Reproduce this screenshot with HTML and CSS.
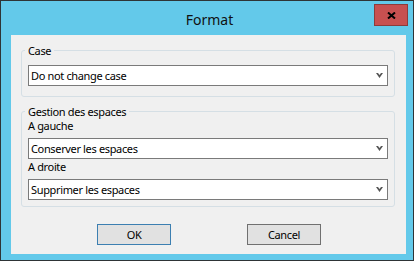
FILE: index.html
```html
<!DOCTYPE html>
<html lang="fr">
<head>
<meta charset="utf-8">
<title>Format</title>
<link rel="stylesheet" href="styles.css">
</head>
<body>
<div class="window">
  <div class="titlebar">
    <span class="spacer"></span>
    <div class="title">Format</div>
    <button class="close" type="button" aria-label="Fermer">
      <svg width="9" height="7" viewBox="0 0 9 7"><path d="M1 0.5 L8 6.5 M8 0.5 L1 6.5" stroke="#000" stroke-width="2" fill="none"/></svg>
    </button>
  </div>
  <div class="client">
    <fieldset class="group g1">
      <legend>Case</legend>
      <div class="select"><span>Do not change case</span><svg class="chev" width="7" height="5" viewBox="0 0 7 5"><polygon points="0,0 2,0 3.5,2 5,0 7,0 3.5,5" fill="#555"/></svg></div>
    </fieldset>
    <fieldset class="group g2">
      <legend>Gestion des espaces</legend>
      <div class="label">A gauche</div>
      <div class="select"><span>Conserver les espaces</span><svg class="chev" width="7" height="5" viewBox="0 0 7 5"><polygon points="0,0 2,0 3.5,2 5,0 7,0 3.5,5" fill="#555"/></svg></div>
      <div class="label">A droite</div>
      <div class="select"><span>Supprimer les espaces</span><svg class="chev" width="7" height="5" viewBox="0 0 7 5"><polygon points="0,0 2,0 3.5,2 5,0 7,0 3.5,5" fill="#555"/></svg></div>
    </fieldset>
    <div class="buttons">
      <button class="btn default" type="button">OK</button>
      <button class="btn" type="button">Cancel</button>
    </div>
  </div>
</div>
</body>
</html>
```

FILE: styles.css
```css
body {
  margin: 0;
  background: #ffffff;
  font-family: "Noto Sans", "Open Sans", sans-serif;
}

.window {
  width: 414px;
  height: 261px;
  box-sizing: border-box;
  border: 1px solid #2e3436;
  background: #63c9ea;
  display: flex;
  flex-direction: column;
}

.titlebar {
  height: 34px;
  flex: none;
  display: grid;
  grid-template-columns: 1fr auto 1fr;
  padding: 0 5px 0 10px;
}

.title {
  font-size: 14px;
  line-height: 20px;
  padding-top: 9px;
  color: #111111;
}

.close {
  justify-self: end;
  align-self: start;
  margin-top: 3px;
  width: 34px;
  height: 22px;
  box-sizing: border-box;
  background: #c75050;
  border: 1px solid #8c3b3b;
  padding: 0;
  display: flex;
  align-items: center;
  justify-content: center;
}

.client {
  flex: 1;
  margin: 0 7px 6px 10px;
  background: #f0f0f0;
  font-size: 11px;
  letter-spacing: -0.35px;
  color: #000000;
  display: flow-root;
}

.group {
  border: 1px solid #d5dfe5;
  border-radius: 3px;
  margin: 8px 11px 0 10px;
  padding: 7px 6px 10px;
  min-width: 0;
}

.group legend {
  padding: 0 3px;
  margin-left: -3px;
  line-height: 15px;
}

.g2 {
  margin-top: 7px;
  padding: 0 6px 6px;
}

.select {
  height: 21px;
  box-sizing: border-box;
  border: 1px solid #7a7a7a;
  background: #ffffff;
  display: flex;
  align-items: center;
  justify-content: space-between;
  padding: 0 4px 0 2px;
  line-height: 15px;
}

.chev {
  display: block;
}

.label {
  line-height: 13px;
  margin-bottom: 6px;
}

.select + .label {
  margin-top: 1px;
}

.buttons {
  display: flex;
  justify-content: center;
  gap: 76px;
  margin-top: 17px;
  padding-left: 1px;
}

.btn {
  width: 74px;
  height: 21px;
  box-sizing: border-box;
  border: 1px solid #707070;
  background: #e1e1e1;
  font: inherit;
  letter-spacing: inherit;
  color: #000000;
  padding: 0;
}

.btn.default {
  border-color: #3c7fb1;
}
```
